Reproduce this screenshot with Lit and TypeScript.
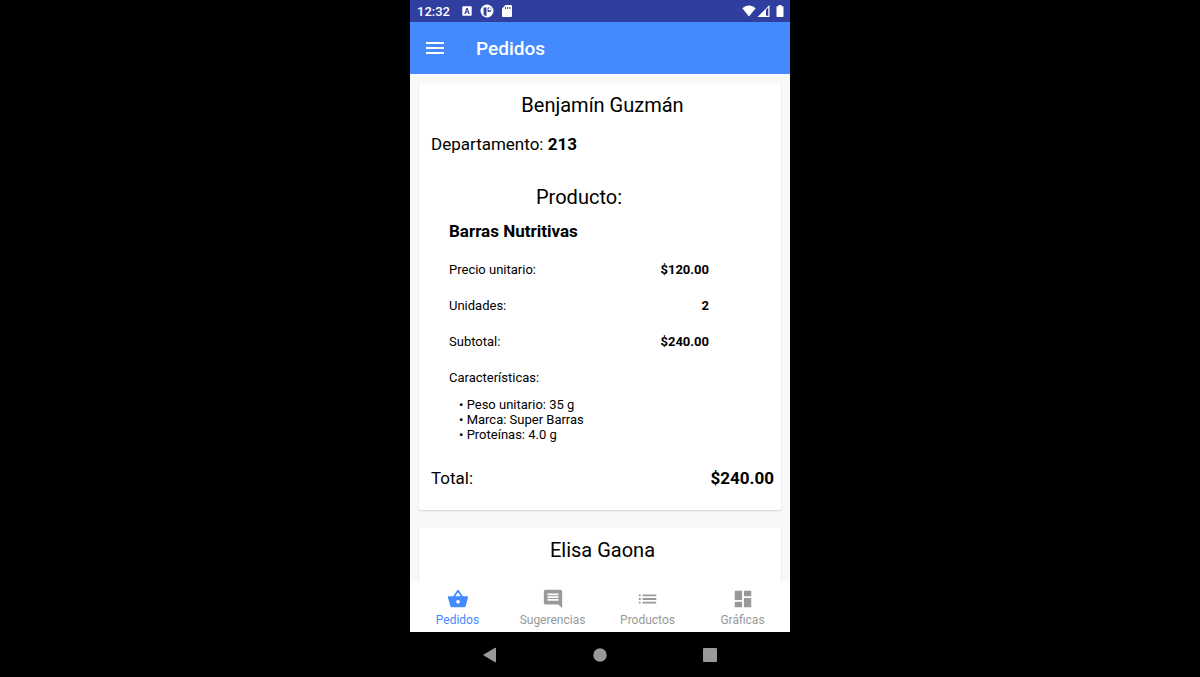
import { LitElement, html, svg, css } from "lit";
import { customElement, property, state } from "lit/decorators.js";
import { classMap } from "lit/directives/class-map.js";

interface Product {
  name: string;
  price: number;
  units: number;
  features: string[];
}

interface Order {
  customer: string;
  apartment: string;
  products: Product[];
}

const ORDERS: Order[] = [
  {
    customer: "Benjamín Guzmán",
    apartment: "213",
    products: [
      {
        name: "Barras Nutritivas",
        price: 120,
        units: 2,
        features: ["Peso unitario: 35 g", "Marca: Super Barras", "Proteínas: 4.0 g"],
      },
    ],
  },
  { customer: "Elisa Gaona", apartment: "", products: [] },
];

const money = (value: number) => `$${value.toFixed(2)}`;

const TABS = [
  {
    label: "Pedidos",
    icon: svg`<path d="M17.21 9l-4.38-6.56a1 1 0 0 0-1.66 0L6.79 9H2c-.55 0-1 .45-1 1 0 .09.01.18.04.27l2.54 9.27c.23.84 1 1.46 1.92 1.46h13c.92 0 1.69-.62 1.93-1.46l2.54-9.27L23 10c0-.55-.45-1-1-1h-4.79zM9 9l3-4.4L15 9H9zm3 8c-1.1 0-2-.9-2-2s.9-2 2-2 2 .9 2 2-.9 2-2 2z"/>`,
  },
  {
    label: "Sugerencias",
    icon: svg`<path d="M21.99 4c0-1.1-.89-2-1.99-2H4c-1.1 0-2 .9-2 2v12c0 1.100.9 2 2 2h14l4 4-.01-18zM18 14H6v-2h12v2zm0-3H6V9h12v2zm0-3H6V6h12v2z"/>`,
  },
  {
    label: "Productos",
    icon: svg`<path d="M2 9h2V7H2v2zm0 4h2v-2H2v2zm0 4h2v-2H2v2zM6 7v2h15V7H6zm0 6h15v-2H6v2zm0 4h15v-2H6v2z"/>`,
  },
  {
    label: "Gráficas",
    icon: svg`<path d="M3 13h8V3H3v10zm0 8h8v-6H3v6zm10 0h8V11h-8v10zm0-18v6h8V3h-8z"/>`,
  },
];

@customElement("status-bar")
export class StatusBar extends LitElement {
  static styles = css`
    :host {
      display: flex;
      align-items: center;
      flex: none;
      height: 22px;
      padding: 0 6px 0 7px;
      background: #303f9f;
      color: #fff;
      font-size: 13px;
      font-weight: 500;
    }
    .notices {
      display: flex;
      align-items: center;
      gap: 6px;
      flex: 1;
      margin-left: 10px;
    }
    .signals {
      display: flex;
      align-items: center;
      gap: 1px;
    }
    .battery {
      margin-left: 4px;
    }
    svg {
      display: block;
      fill: currentColor;
    }
  `;

  render() {
    return html`
      <time>12:32</time>
      <span class="notices">
        <svg width="14" height="14" viewBox="0 0 14 14" aria-hidden="true">
          <path fill-rule="evenodd" d="M3 2.300h8a.7.7 0 0 1 .7.700v8a.7.7 0 0 1-.7.700H3a.7.7 0 0 1-.7-.7V3a.7.7 0 0 1 .7-.7zM6.300 4L4.300 10h1.300l.400-1.400h2l.4 1.400h1.300L7.700 4zM7 5.500l.7 2.100H6.300z" />
        </svg>
        <svg width="14" height="14" viewBox="0 0 14 14" aria-hidden="true">
          <circle cx="7" cy="7" r="6.500" />
          <path fill="#303f9f" d="M3.600 3.500h2.900v8.800L3.600 11zM7.600 3.500h1.700a2.200 2.200 0 0 1 0 4.400H7.600z" />
          <circle cx="9.700" cy="5.300" r="1.300" />
        </svg>
        <svg width="14" height="14" viewBox="0 0 14 14" aria-hidden="true">
          <path d="M5.500 1H11a1 1 0 0 1 1 1v10a1 1 0 0 1-1 1H3a1 1 0 0 1-1-1V4.500z" />
          <path fill="#303f9f" d="M5 3h1v2H5zM7.200 3h1v2h-1zM9.300 3h1v2h-1z" />
        </svg>
      </span>
      <span class="signals">
        <svg width="14" height="14" viewBox="0 0 14 14" aria-hidden="true">
          <path d="M.3 4.300C4 .4 10 .4 13.700 4.300L7 12.500z" />
        </svg>
        <svg width="14" height="14" viewBox="0 0 14 14" aria-hidden="true">
          <path fill-rule="evenodd" d="M12.500 1v12H.5zM9 5.800v6h2.300V3.500z" />
        </svg>
        <svg class="battery" width="8" height="14" viewBox="0 0 8 14" aria-hidden="true">
          <path d="M2.500 1h3v1.300h1.300a.7.7 0 0 1 .7.700v9.300a.7.7 0 0 1-.7.700H1.200a.7.7 0 0 1-.7-.7V3a.7.7 0 0 1 .7-.7h1.300z" />
        </svg>
      </span>
    `;
  }
}

@customElement("order-card")
export class OrderCard extends LitElement {
  @property({ attribute: false }) order!: Order;

  static styles = css`
    :host {
      display: block;
      padding: 10px 7px 20px 12px;
      border-radius: 2px;
      background: #fff;
      box-shadow: 0 1px 2px rgba(0, 0, 0, 0.16);
      font-size: 17px;
      line-height: 24px;
    }
    h2,
    h3,
    h4,
    p,
    dl,
    dd,
    ul {
      margin: 0;
      padding: 0;
    }
    h2,
    h3 {
      font-size: 20px;
      font-weight: 400;
      text-align: center;
    }
    h4 {
      margin-top: 10px;
      font-size: 17px;
    }
    b,
    dd {
      font-weight: 700;
    }
    .apartment {
      margin-top: 15px;
    }
    .product {
      margin: 29px 65px 0 18px;
      font-size: 13px;
    }
    .row,
    .total {
      display: flex;
      justify-content: space-between;
    }
    .row {
      margin-top: 12px;
    }
    h4 + dl {
      margin-top: 15px;
    }
    .features {
      margin: 7px 0 0 10px;
      line-height: 15px;
      list-style: none;
    }
    .features li::before {
      content: "• ";
    }
    .total {
      margin-top: 24px;
    }
  `;

  private renderProduct(product: Product) {
    return html`
      <section class="product">
        <h3>Producto:</h3>
        <h4>${product.name}</h4>
        <dl>
          <div class="row"><dt>Precio unitario:</dt><dd>${money(product.price)}</dd></div>
          <div class="row"><dt>Unidades:</dt><dd>${product.units}</dd></div>
          <div class="row"><dt>Subtotal:</dt><dd>${money(product.price * product.units)}</dd></div>
        </dl>
        <p class="row">Características:</p>
        <ul class="features">
          ${product.features.map((feature) => html`<li>${feature}</li>`)}
        </ul>
      </section>
    `;
  }

  render() {
    const { customer, apartment, products } = this.order;
    const total = products.reduce((sum, p) => sum + p.price * p.units, 0);
    return html`
      <h2>${customer}</h2>
      ${apartment ? html`<p class="apartment">Departamento: <b>${apartment}</b></p>` : null}
      ${products.map((product) => this.renderProduct(product))}
      ${products.length
        ? html`<p class="total"><span>Total:</span><b>${money(total)}</b></p>`
        : null}
    `;
  }
}

@customElement("app-root")
export class AppRoot extends LitElement {
  @state() private active = "Pedidos";

  static styles = css`
    :host {
      display: flex;
      justify-content: center;
      height: 100vh;
      background: #000;
      color: #000;
      font-family: Roboto, sans-serif;
    }
    .device {
      display: flex;
      flex-direction: column;
      width: 100%;
      max-width: 380px;
    }
    .toolbar {
      display: flex;
      align-items: center;
      flex: none;
      gap: 29px;
      height: 52px;
      padding: 0 13px;
      background: #448aff;
      color: #fff;
    }
    h1 {
      margin: 0;
      font-size: 19px;
      font-weight: 500;
    }
    button {
      padding: 0;
      border: 0;
      background: none;
      color: inherit;
      font: inherit;
      cursor: pointer;
    }
    svg {
      display: block;
      fill: currentColor;
    }
    .orders {
      display: flex;
      flex-direction: column;
      gap: 18px;
      flex: 1;
      min-height: 0;
      padding: 9px 9px 0;
      background: #f9f9f9;
      overflow: hidden;
    }
    order-card {
      flex: none;
    }
    .tabs {
      display: grid;
      grid-template-columns: repeat(4, 1fr);
      flex: none;
      height: 51px;
      background: #fff;
    }
    .tab {
      display: flex;
      flex-direction: column;
      align-items: center;
      justify-content: flex-end;
      gap: 2px;
      padding-bottom: 4px;
      color: #999;
      font-size: 12px;
      line-height: 16px;
    }
    .tab.active {
      color: #448aff;
    }
    .system {
      display: flex;
      align-items: center;
      justify-content: space-between;
      flex: none;
      height: 45px;
      padding: 0 71px;
      color: #999;
    }
  `;

  render() {
    return html`
      <div class="device">
        <status-bar></status-bar>
        <header class="toolbar">
          <button aria-label="Menú">
            <svg width="24" height="24" viewBox="0 0 24 24">
              <path d="M3 18h18v-2H3v2zm0-5h18v-2H3v2zm0-7v2h18V6H3z" />
            </svg>
          </button>
          <h1>Pedidos</h1>
        </header>
        <main class="orders">
          ${ORDERS.map((order) => html`<order-card .order=${order}></order-card>`)}
        </main>
        <nav class="tabs">
          ${TABS.map(
            (tab) => html`
              <button
                class=${classMap({ tab: true, active: tab.label === this.active })}
                @click=${() => (this.active = tab.label)}
              >
                <svg width="22" height="22" viewBox="0 0 24 24" aria-hidden="true">${tab.icon}</svg>
                ${tab.label}
              </button>
            `
          )}
        </nav>
        <footer class="system">
          <button aria-label="Atrás">
            <svg width="18" height="18" viewBox="0 0 18 18">
              <path d="M15 2.300v13.400a.6.6 0 0 1-.9.500L2.700 9.500a.6.6 0 0 1 0-1L14.100 1.800a.6.6 0 0 1 .9.500z" />
            </svg>
          </button>
          <button aria-label="Inicio">
            <svg width="18" height="18" viewBox="0 0 18 18"><circle cx="9" cy="9" r="6.700" /></svg>
          </button>
          <button aria-label="Recientes">
            <svg width="18" height="18" viewBox="0 0 18 18"><rect x="2" y="2" width="14" height="14" rx="1" /></svg>
          </button>
        </footer>
      </div>
    `;
  }
}
